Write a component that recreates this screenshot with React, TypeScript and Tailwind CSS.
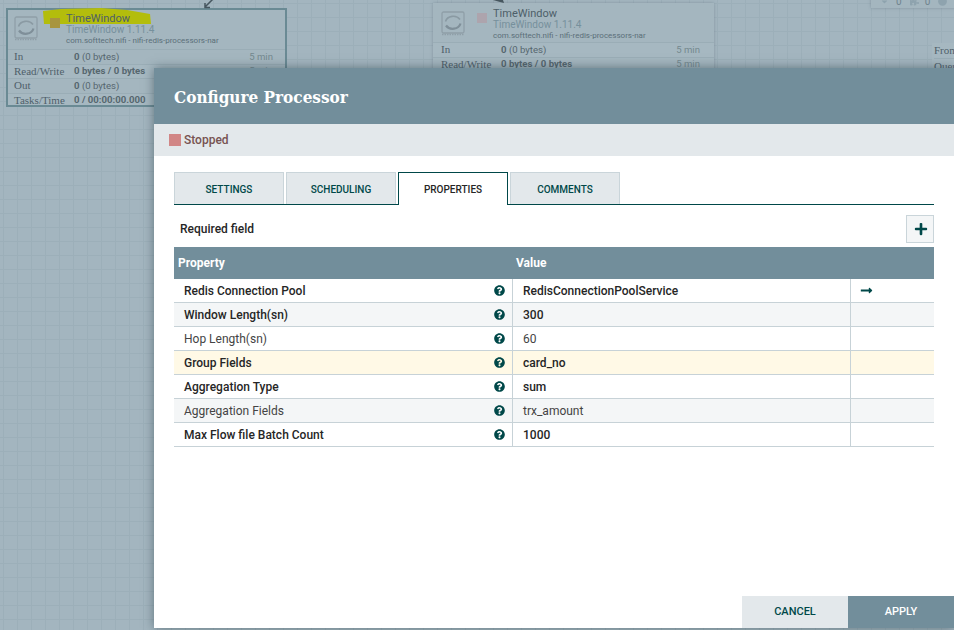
import { FaPlus, FaQuestionCircle, FaLongArrowAltRight, FaCaretDown, FaPuzzlePiece, FaCircle } from 'react-icons/fa';

const properties = [
  { name: 'Redis Connection Pool', value: 'RedisConnectionPoolService', required: true, arrow: true },
  { name: 'Window Length(sn)', value: '300', required: true },
  { name: 'Hop Length(sn)', value: '60' },
  { name: 'Group Fields', value: 'card_no', required: true, active: true },
  { name: 'Aggregation Type', value: 'sum', required: true },
  { name: 'Aggregation Fields', value: 'trx_amount' },
  { name: 'Max Flow file Batch Count', value: '1000', required: true },
];

const tabs = ['SETTINGS', 'SCHEDULING', 'PROPERTIES', 'COMMENTS'];

const stats = [
  { label: 'In', value: '0', rest: ' (0 bytes)', time: '5 min' },
  { label: 'Read/Write', value: '0 bytes / 0 bytes', rest: '', time: '5 min' },
  { label: 'Out', value: '0', rest: ' (0 bytes)', time: '5 min' },
  { label: 'Tasks/Time', value: '0 / 00:00:00.000', rest: '', time: '5 min' },
];

function ProcessorIcon() {
  return (
    <svg className="mt-[3px] shrink-0" width="24" height="25" viewBox="0 0 24 25" fill="none">
      <rect x="1" y="1" width="22" height="21" rx="1.5" stroke="#8f9fa8" strokeWidth="1.3" />
      <path d="M1 23.5h22" stroke="#8f9fa8" strokeWidth="1.5" strokeDasharray="1.5 1" />
      <path d="M4.5 10.5a8 7 0 0 1 14.5-2" stroke="#8a9aa3" strokeWidth="1.6" />
      <path d="M19.5 12.5a8 7 0 0 1-14.5 2" stroke="#7f8f99" strokeWidth="2.2" />
    </svg>
  );
}

function ProcessorNode({ selected, className }: { selected?: boolean; className: string }) {
  return (
    <div
      className={`absolute w-[281px] bg-[#a4b6bf] ${
        selected ? 'outline-2 -outline-offset-2 outline-[#6a8a94]' : 'shadow-[0_0_3px_rgba(70,90,100,0.35)]'
      } ${className}`}
    >
      {selected && (
        <svg className="absolute left-px top-0" width="160" height="34" viewBox="0 0 160 34">
          <path d="M36 3 54 1l40-1 26 2 23 4 1 10H37z" fill="#b3bd0c" />
        </svg>
      )}
      <div className={`relative flex items-start px-2 pt-[5px] ${selected ? 'h-[41px]' : 'h-[39px]'}`}>
        <ProcessorIcon />
        <div className={`ml-3 mt-[5px] size-[10px] shrink-0 ${selected ? 'bg-[#a8953f]' : 'bg-[#ada4ad]'}`} />
        <div className="ml-[6px] min-w-0">
          <div className="text-[11px] leading-[11px] text-[#4d5f69]">TimeWindow</div>
          <div className="text-[10px] leading-[12px] text-[#76909c]">TimeWindow 1.11.4</div>
          <div className="text-[8px] leading-[10px] whitespace-nowrap text-[#5b6f79]">
            com.softtech.nifi - nifi-redis-processors-nar
          </div>
        </div>
      </div>
      {stats.map((row) => (
        <div
          key={row.label}
          className="flex h-[14.5px] items-center border-t border-[#9aadb6] pl-2 pr-[14px] text-[9.6px] leading-none text-[#56676f] even:bg-[#a6b8c1]"
        >
          <span className="w-[60px] whitespace-nowrap font-['Liberation_Serif',serif] text-[11px] text-[#4f606a]">
            {row.label}
          </span>
          <span className="font-bold whitespace-nowrap">
            {row.value}
            <span className="font-normal">{row.rest}</span>
          </span>
          <span className="ml-auto text-[#75898f]">{row.time}</span>
        </div>
      ))}
    </div>
  );
}

export default function App() {
  return (
    <div className="relative h-screen w-full overflow-hidden bg-[#a3b5bf] bg-[linear-gradient(#9cafb9_1px,transparent_1px),linear-gradient(90deg,#9cafb9_1px,transparent_1px)] bg-size-[14px_14px] bg-position-[3px_3px] font-['Roboto',sans-serif]">
      {/* Flow canvas behind the dialog */}
      <ProcessorNode selected className="left-[6px] top-[8px]" />
      <ProcessorNode className="left-[433px] top-[3px]" />

      <svg className="absolute left-[200px] top-0" width="20" height="10" viewBox="0 0 20 10" fill="none">
        <path d="M14 -2 5 7M5 3v4.5h5" stroke="#46565f" strokeWidth="1.5" />
      </svg>
      <svg className="absolute left-[490px] top-0" width="22" height="5" viewBox="0 0 22 5">
        <path d="M3 0h10l1 3-4-1z" fill="#46565f" />
      </svg>

      {/* Operate strip cut off by the top of the page */}
      <div className="absolute left-[871px] -top-[6px] flex h-[14px] w-[90px] items-center bg-[#a4b6bf] pl-[9px] text-[10px] text-[#6f848e] shadow-[0_0_3px_rgba(70,90,100,0.35)]">
        <FaCaretDown size={9} className="text-[#8ea3ae]" />
        <span className="ml-[7px]">0</span>
        <FaPuzzlePiece size={9} className="ml-[8px] text-[#8ea3ae]" />
        <span className="ml-[6px]">0</span>
        <FaCircle size={9} className="ml-[8px] text-[#8ea3ae]" />
      </div>

      <div className="absolute left-[932px] top-[43px] w-[40px] bg-[#a6b8c1] pl-[2px] font-['Liberation_Serif',serif] text-[11px] leading-[15px] text-[#4f606a]">
        <div className="border-b border-[#9aadb6]">From</div>
        <div>Queue</div>
      </div>

      {/* Configure Processor dialog */}
      <div className="absolute left-[154px] right-0 top-[68px] flex h-[560px] flex-col bg-white shadow-[0_0_10px_rgba(40,60,70,0.55)]">
        <div className="flex h-[56px] items-center bg-[#728e9b] pl-5 pt-[3px] font-['DejaVu_Serif_Condensed','DejaVu_Serif',serif] text-[17px] font-bold text-white">
          Configure Processor
        </div>
        <div className="flex h-[32px] items-center gap-[3px] bg-[#e3e8eb] pl-[15px] text-xs font-medium text-[#775351]">
          <span className="size-3 bg-[#d18686]" />
          Stopped
        </div>

        <div className="mt-4 flex flex-col pl-5 pr-5">
          <div className="flex gap-[2px] border-b border-[#004849]">
            {tabs.map((tab) =>
              tab === 'PROPERTIES' ? (
                <div
                  key={tab}
                  className="-mb-px flex h-[33px] w-[110px] items-center justify-center border border-b-0 border-[#004849] bg-white text-[10px] font-medium text-[#262626]"
                >
                  {tab}
                </div>
              ) : (
                <div
                  key={tab}
                  className="flex h-[32px] w-[110px] items-center justify-center border border-b-0 border-[#cad5da] bg-[#e3e8eb] pt-px text-[10px] font-medium text-[#004849]"
                >
                  {tab}
                </div>
              ),
            )}
          </div>

          <div className="mt-[10px] flex h-[28px] items-center justify-between pl-[6px]">
            <span className="text-xs font-medium text-[#262626]">Required field</span>
            <button className="flex size-[28px] items-center justify-center border border-[#cad5da] bg-[#f4f6f7] pl-[2px] text-[#004849]">
              <FaPlus size={14} />
            </button>
          </div>

          <div className="mt-[4px] grid h-[32px] grid-cols-[338px_338px_84px] items-center bg-[#728e9b] text-xs font-bold text-white">
            <span className="pl-1">Property</span>
            <span className="pl-1">Value</span>
          </div>

          {properties.map((p, i) => (
            <div
              key={p.name}
              className={`grid h-[24px] grid-cols-[338px_338px_84px] items-center border-b border-[#c7d2d7] text-xs text-[#262626] ${
                p.active ? 'bg-[#fff9e6]' : i % 2 === 1 ? 'bg-[#f4f6f7]' : 'bg-white'
              } ${p.required ? 'font-medium' : ''}`}
            >
              <div className="flex h-full items-center justify-between pl-[10px] pr-[7px]">
                <span className={p.required ? '' : 'text-[#444]'}>{p.name}</span>
                <FaQuestionCircle size={11} className="text-[#004849]" />
              </div>
              <div className="flex h-full items-center border-l border-[#c7d2d7] pl-[10px]">
                <span className={p.required ? '' : 'text-[#444]'}>{p.value}</span>
              </div>
              <div className="flex h-full items-center border-l border-[#c7d2d7] pl-[9px] text-[#004849]">
                {p.arrow && <FaLongArrowAltRight size={13} />}
              </div>
            </div>
          ))}
        </div>

        <div className="mt-auto flex justify-end text-[11px] font-medium">
          <button className="h-[32px] w-[106px] bg-[#e3e8eb] pt-px text-[#004849]">CANCEL</button>
          <button className="h-[32px] w-[106px] bg-[#728e9b] pt-px text-white">APPLY</button>
        </div>
      </div>
    </div>
  );
}
